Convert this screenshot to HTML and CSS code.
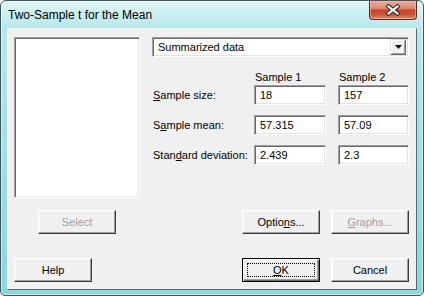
FILE: index.html
```html
<!DOCTYPE html>
<html>
<head>
<meta charset="utf-8">
<title>Two-Sample t for the Mean</title>
<link rel="stylesheet" href="styles.css">
</head>
<body>
<div class="window">
  <div class="titlebar">
    <span class="title">Two-Sample t for the Mean</span>
    <div class="close">
      <svg width="16" height="12" viewBox="0 0 16 12">
        <path d="M3.5 2.5 L12.5 9.5 M12.5 2.5 L3.5 9.5" stroke="#3b2620" stroke-width="4.2" stroke-linecap="square" fill="none"/>
        <path d="M3.5 2.5 L12.5 9.5 M12.5 2.5 L3.5 9.5" stroke="#ffffff" stroke-width="2.2" stroke-linecap="square" fill="none"/>
      </svg>
    </div>
  </div>
  <div class="client">
    <div class="top">
      <div class="listbox sunken"></div>
      <div class="panel">
        <div class="combo sunken">
          <span class="combo-text">Summarized data</span>
          <div class="combo-btn">
            <svg width="7" height="4" viewBox="0 0 7 4"><path d="M0 0 H7 L3.5 4 Z" fill="#000"/></svg>
          </div>
        </div>
        <div class="grid head">
          <span></span>
          <span class="hdr">Sample 1</span>
          <span class="hdr">Sample 2</span>
        </div>
        <div class="grid rows">
          <label class="lbl"><u>S</u>ample size:</label>
          <div class="field sunken">18</div>
          <div class="field sunken">157</div>
          <label class="lbl">S<u>a</u>mple mean:</label>
          <div class="field sunken">57.315</div>
          <div class="field sunken">57.09</div>
          <label class="lbl">Stan<u>d</u>ard deviation:</label>
          <div class="field sunken">2.439</div>
          <div class="field sunken">2.3</div>
        </div>
      </div>
    </div>
    <div class="btnrow mid">
      <div class="btn disabled select">Select</div>
      <div class="btngroup">
        <div class="btn">Optio<u>n</u>s...</div>
        <div class="btn disabled"><u>G</u>raphs...</div>
      </div>
    </div>
    <div class="btnrow bottom">
      <div class="btn">Help</div>
      <div class="btngroup">
        <div class="btn default"><span class="focus"><u>O</u>K</span></div>
        <div class="btn">Cancel</div>
      </div>
    </div>
  </div>
</div>
</body>
</html>
```

FILE: styles.css
```css
html, body {
  margin: 0;
  padding: 0;
  background: #ffffff;
}

.window {
  width: 424px;
  height: 296px;
  box-sizing: border-box;
  border: 1px solid #3d5360;
  border-radius: 6px 6px 5px 5px;
  background: linear-gradient(to bottom, #e4f6f7 0px, #c9eef0 14px, #b8e8eb 28px, #a3e0e3 140px, #8ad6d8 296px);
  box-shadow: inset 0 0 0 1px rgba(255, 255, 255, 0.55);
  display: flex;
  flex-direction: column;
  overflow: hidden;
  font-family: "Liberation Sans", Arial, sans-serif;
  font-size: 11px;
  color: #000;
}

.titlebar {
  height: 27px;
  flex: none;
  display: flex;
  justify-content: space-between;
  align-items: flex-start;
  padding: 0 6px 0 7px;
}

.title {
  font-family: "Liberation Sans", Arial, sans-serif;
  font-size: 12px;
  line-height: 15px;
  padding-top: 7px;
  color: #000;
}

.close {
  width: 46px;
  height: 18px;
  border: 1px solid #5b2b22;
  border-top: none;
  border-radius: 0 0 4px 4px;
  background: linear-gradient(to bottom, #e9ab9c 0%, #dc8b77 40%, #c7462c 52%, #c65338 75%, #dd8d73 100%);
  box-shadow: inset 0 0 0 1px rgba(255, 210, 195, 0.45);
  display: flex;
  align-items: center;
  justify-content: center;
}

.close svg {
  display: block;
}

.client {
  flex: 1;
  margin: 0 6px 5px 6px;
  border: 1px solid;
  border-color: #e9f6f7 #4e6c76 #4e6c76 #e9f6f7;
  background: #f0f0f0;
  padding: 8px 7px 0 6px;
  display: flex;
  flex-direction: column;
}

.sunken {
  box-sizing: border-box;
  background: #ffffff;
  border: 1px solid;
  border-color: #a0a0a0 #ffffff #ffffff #a0a0a0;
  box-shadow: inset 1px 1px 0 #696969, inset -1px -1px 0 #e3e3e3;
}

.top {
  display: flex;
  gap: 12px;
}

.listbox {
  width: 126px;
  height: 161px;
  flex: none;
}

.panel {
  flex: 1;
  display: flex;
  flex-direction: column;
}

.combo {
  height: 20px;
  display: flex;
  align-items: center;
  justify-content: space-between;
  padding: 2px;
}

.combo-text {
  padding-left: 3px;
  line-height: 14px;
}

.combo-btn {
  width: 16px;
  height: 16px;
  box-sizing: border-box;
  background: #f0f0f0;
  border: 1px solid;
  border-color: #e3e3e3 #696969 #696969 #e3e3e3;
  box-shadow: inset 1px 1px 0 #ffffff, inset -1px -1px 0 #a0a0a0;
  display: flex;
  align-items: center;
  justify-content: center;
}

.grid {
  display: grid;
  grid-template-columns: 102px 84px 71px;
}

.head {
  margin-top: 12px;
  height: 16px;
  align-items: center;
}

.hdr {
  padding-left: 1px;
  line-height: 14px;
}

.rows {
  grid-auto-rows: 20px;
  row-gap: 10px;
  align-items: center;
}

.field {
  height: 20px;
  width: 72px;
  padding-left: 5px;
  line-height: 17px;
  display: flex;
  align-items: center;
}

.rows .field:nth-child(3n) {
  width: 71px;
}

.lbl {
  padding-left: 1px;
}

.btnrow {
  display: flex;
  justify-content: space-between;
  align-items: flex-start;
}

.mid {
  margin-top: 12px;
}

.bottom {
  margin-top: 24px;
}

.btngroup {
  display: flex;
  gap: 11px;
}

.btn {
  width: 78px;
  height: 24px;
  box-sizing: border-box;
  background: #f0f0f0;
  border: 1px solid;
  border-color: #ffffff #3c3c3c #3c3c3c #ffffff;
  box-shadow: inset -1px -1px 0 #a0a0a0, inset 1px 1px 0 #f8f8f8;
  display: flex;
  align-items: center;
  justify-content: center;
  line-height: 14px;
}

.select {
  margin-left: 24px;
}

.disabled {
  color: #a0a0a0;
}

.btn.default {
  border: 1px solid #000;
  box-shadow: inset 1px 1px 0 #ffffff, inset -1px -1px 0 #696969, inset -2px -2px 0 #a0a0a0;
  padding: 4px;
}

.focus {
  flex: 1;
  align-self: stretch;
  border: 1px dotted #000;
  display: flex;
  align-items: center;
  justify-content: center;
}
```
